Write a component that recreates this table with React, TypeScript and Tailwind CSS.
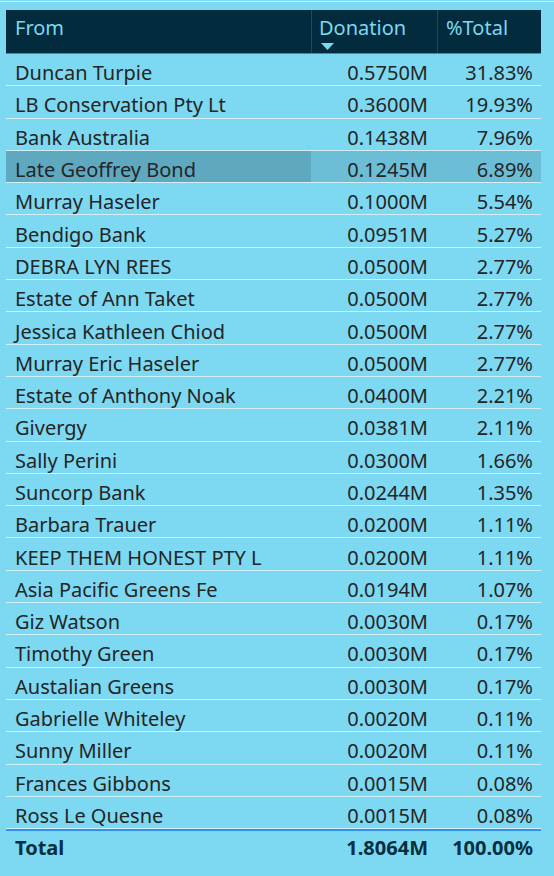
const rows: [string, string, string][] = [
  ["Duncan Turpie", "0.5750M", "31.83%"],
  ["LB Conservation Pty Lt", "0.3600M", "19.93%"],
  ["Bank Australia", "0.1438M", "7.96%"],
  ["Late Geoffrey Bond", "0.1245M", "6.89%"],
  ["Murray Haseler", "0.1000M", "5.54%"],
  ["Bendigo Bank", "0.0951M", "5.27%"],
  ["DEBRA LYN REES", "0.0500M", "2.77%"],
  ["Estate of Ann Taket", "0.0500M", "2.77%"],
  ["Jessica Kathleen Chiod", "0.0500M", "2.77%"],
  ["Murray Eric Haseler", "0.0500M", "2.77%"],
  ["Estate of Anthony Noak", "0.0400M", "2.21%"],
  ["Givergy", "0.0381M", "2.11%"],
  ["Sally Perini", "0.0300M", "1.66%"],
  ["Suncorp Bank", "0.0244M", "1.35%"],
  ["Barbara Trauer", "0.0200M", "1.11%"],
  ["KEEP THEM HONEST PTY L", "0.0200M", "1.11%"],
  ["Asia Pacific Greens Fe", "0.0194M", "1.07%"],
  ["Giz Watson", "0.0030M", "0.17%"],
  ["Timothy Green", "0.0030M", "0.17%"],
  ["Austalian Greens", "0.0030M", "0.17%"],
  ["Gabrielle Whiteley", "0.0020M", "0.11%"],
  ["Sunny Miller", "0.0020M", "0.11%"],
  ["Frances Gibbons", "0.0015M", "0.08%"],
  ["Ross Le Quesne", "0.0015M", "0.08%"],
];

// row 4 is the hovered/selected one in the report
const HIGHLIGHT = 3;

export default function App() {
  return (
    <div
      className="w-[554px] h-[876px] bg-[#7dd8f1] overflow-hidden"
      style={{ fontFamily: '"Noto Sans", "Open Sans", sans-serif' }}
    >
      <div className="h-px mt-px bg-[#d2ecf4]" />

      <div className="ml-[6px] mt-[8px] w-[535px]">
        {/* ── Header ─────────────────────────────── */}
        <div className="flex h-[44px] bg-[#022c3d] border-b border-[#2b8fd8] text-[20px] text-[#7dd8f1] leading-none">
          <div className="w-[305px] pl-[9px] pt-[8px]">From</div>
          <div className="w-[126px] border-l border-[#21495a] pl-[7px] pt-[8px] flex flex-col">
            <span>Donation</span>
            <svg width="13" height="7" viewBox="0 0 13 7" className="mt-[5px] ml-[2px]">
              <path d="M0 0 H13 L6.5 7 Z" fill="#7dd8f1" />
            </svg>
          </div>
          <div className="w-[104px] border-l border-[#21495a] pl-[8px] pt-[8px]">%Total</div>
        </div>

        {/* ── Rows ───────────────────────────────── */}
        {rows.map(([name, amt, pct], i) => {
          const hl = i === HIGHLIGHT;
          return (
            <div
              key={name}
              className="flex h-[32.3px] text-[20px] leading-none text-[#252525] border-b border-[#d0f0fa]"
            >
              <div className={`w-[305px] h-full flex items-center pl-[9px] pt-[7px] ${hl ? "bg-[#5fa9c0]" : ""}`}>
                {name}
              </div>
              <div className={`w-[126px] h-full flex items-center justify-end pr-[9px] pt-[7px] ${hl ? "bg-[#6cbed6]" : ""}`}>
                {amt}
              </div>
              <div className={`w-[104px] h-full flex items-center justify-end pr-[8px] pt-[7px] ${hl ? "bg-[#6cbed6]" : ""}`}>
                {pct}
              </div>
            </div>
          );
        })}

        {/* ── Total ──────────────────────────────── */}
        <div className="flex h-[36px] items-center text-[20px] leading-none font-bold text-[#062f40] border-t-2 border-[#2e93ee]">
          <div className="w-[305px] pl-[9px]">Total</div>
          <div className="w-[126px] text-right pr-[9px]">1.8064M</div>
          <div className="w-[104px] text-right pr-[8px]">100.00%</div>
        </div>
      </div>
    </div>
  );
}
